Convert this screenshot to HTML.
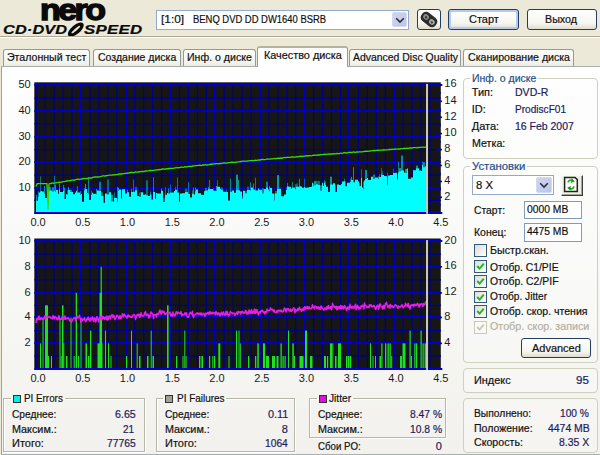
<!DOCTYPE html>
<html lang="ru"><head><meta charset="utf-8"><title>Nero CD-DVD Speed</title>
<style>
html,body{margin:0;padding:0}
body{width:600px;height:455px;background:#ece9d8;position:relative;overflow:hidden;font:11px "Liberation Sans",Arial,sans-serif;color:#111}
.abs{position:absolute}
.t{position:absolute;z-index:5;transform-origin:0 0;-webkit-text-stroke:0.2px currentColor;white-space:pre;line-height:13px;font-size:11px}
.sep{position:absolute;left:0;top:35.6px;width:600px;height:1px;background:#aca899;border-bottom:1px solid #fff}
.panel{position:absolute;left:1px;top:65.5px;width:610px;height:387.5px;background:linear-gradient(#fefefe,#fbfbfa 30%,#f7f7f4 60%,#f2f1ed);border:1px solid #9aa3a4;border-top-color:#a8aeae;border-bottom-color:#a9aeae}
.tab{position:absolute;top:48.5px;height:17.5px;box-sizing:border-box;border:1px solid #919b9c;border-bottom:none;border-radius:3px 3px 0 0;background:linear-gradient(#fdfdfb,#f3f3ec 80%,#eceade)}
.tab.sel{top:46px;height:21px;background:#fefefe;z-index:3;border-top:2px solid #b3b39e}
.combo{position:absolute;box-sizing:border-box;border:1px solid #93aac8;background:#fff}
.dd{position:absolute;box-sizing:border-box;border:1px solid #d3d9f1;border-radius:2px;background:linear-gradient(135deg,#d0d6ee,#bcc5e8)}
.btn{position:absolute;box-sizing:border-box;border:1px solid #213f5c;border-radius:3px;background:linear-gradient(#ffffff,#f6f5ef 70%,#dfdccd)}
.btn.def{box-shadow:inset 0 0 0 2px #b5caf1}
.gb{position:absolute;box-sizing:border-box;border:1px solid #d0d0bf;border-radius:4px;background:rgba(255,255,255,0.25)}
.eb{position:absolute;box-sizing:border-box;border:1px solid #b8b6a9;background:transparent;box-shadow:1px 1px 0 #fff, inset 1px 1px 0 #fff}
.lg{position:absolute;background:#fbfbf9;height:1px}
.cb{position:absolute;box-sizing:border-box;width:12.6px;height:12.6px;border:1px solid #345878;background:linear-gradient(135deg,#dcdcd7,#ffffff)}
.cb.dis{border-color:#cac8bb;background:#fbfbf8}
.cb svg{position:absolute;left:1px;top:1px}
.sq{position:absolute;box-sizing:border-box;width:8px;height:8px;border:1px solid #333}
.edit{position:absolute;box-sizing:border-box;border:1px solid #7f9db9;background:#fff}
</style></head><body>

<!-- logo -->
<div class="abs" style="left:39.5px;top:-10.5px;font:bold 30px/40px 'Liberation Sans',Arial,sans-serif;letter-spacing:-2.2px;color:#0a0a0a;-webkit-text-stroke:1.4px #0a0a0a;transform-origin:0 0;transform:scaleX(1.13)">nero</div>
<div class="abs" id="cds" style="left:2.5px;top:23px;font:italic bold 12px/14px 'Liberation Sans',Arial,sans-serif;color:#0a0a0a;transform-origin:0 0;transform:scaleX(1.36);letter-spacing:0.1px;-webkit-text-stroke:0.2px #0a0a0a">CD·DVD</div>
<svg class="abs" style="left:65px;top:21px" width="22" height="17" viewBox="0 0 22 17"><ellipse cx="10.8" cy="8.6" rx="9.6" ry="4.5" transform="rotate(-40 10.8 8.6)" fill="#0a0a0a"/><ellipse cx="10.8" cy="8.6" rx="5.6" ry="1.1" transform="rotate(-40 10.8 8.6)" fill="#ece9d8"/></svg>
<div class="abs" id="spd" style="left:84px;top:23px;font:italic bold 12px/14px 'Liberation Sans',Arial,sans-serif;color:#0a0a0a;transform-origin:0 0;transform:scaleX(1.4);letter-spacing:0.2px;-webkit-text-stroke:0.2px #0a0a0a">SPEED</div>

<!-- drive combo -->
<div class="combo" style="left:156px;top:10px;width:253px;height:20px"></div>
<div class="dd" style="left:392px;top:12px;width:15px;height:15px"></div>
<svg class="abs" style="left:394.5px;top:17px" width="10" height="7" viewBox="0 0 10 7"><path d="M1.2 1.2 L5 5 L8.8 1.2" fill="none" stroke="#2c2c40" stroke-width="1.6"/></svg>

<!-- icon button -->
<div class="btn" style="left:417px;top:9.2px;width:24px;height:20.4px"></div>
<svg class="abs" style="left:419px;top:10px" width="20" height="19" viewBox="0 0 20 19"><g transform="rotate(38 10 9.5)"><rect x="1.2" y="4.2" width="17.6" height="10.6" rx="4.6" fill="#2c2c2c"/><ellipse cx="6.2" cy="9.3" rx="3" ry="2.6" fill="#8d8d88"/><ellipse cx="13.8" cy="9.7" rx="3" ry="2.6" fill="#a9a9a4"/><ellipse cx="6.4" cy="9.6" rx="1.2" ry="1" fill="#2c2c2c"/><ellipse cx="14" cy="10" rx="1.2" ry="1" fill="#3c3c3c"/></g></svg>

<div class="btn def" style="left:448px;top:9.4px;width:70.5px;height:20.4px"></div>
<div class="btn" style="left:527px;top:9.4px;width:69.5px;height:20.4px"></div>

<div class="sep"></div>

<!-- tabs -->
<div class="tab" style="left:2.5px;width:87.5px"></div>
<div class="tab" style="left:93px;width:88px"></div>
<div class="tab" style="left:183px;width:73px"></div>
<div class="tab" style="left:349px;width:112px"></div>
<div class="tab" style="left:463px;width:111px"></div>
<div class="panel"></div>
<div class="tab sel" style="left:257px;width:91px"></div>

<svg class="abs" style="left:0;top:68px" width="462" height="322" viewBox="0 68 462 322" font-family="Liberation Sans, Arial, sans-serif" font-size="11" fill="#1a1a1a">
<rect x="34.3" y="82.3" width="406.5" height="131.4" fill="#161614"/>
<rect x="35.36" y="84.9" width="1.6" height="127.8" fill="#000090"/>
<rect x="44.61" y="84.9" width="1.2" height="127.8" fill="#000084"/>
<rect x="53.56" y="84.9" width="1.2" height="127.8" fill="#000084"/>
<rect x="62.51" y="84.9" width="1.2" height="127.8" fill="#000084"/>
<rect x="71.46" y="84.9" width="1.2" height="127.8" fill="#000084"/>
<rect x="80" y="84.9" width="2" height="127.8" fill="#0000b6"/>
<rect x="89.35" y="84.9" width="1.2" height="127.8" fill="#000084"/>
<rect x="98.30" y="84.9" width="1.2" height="127.8" fill="#000084"/>
<rect x="107.25" y="84.9" width="1.2" height="127.8" fill="#000084"/>
<rect x="116.20" y="84.9" width="1.2" height="127.8" fill="#000084"/>
<rect x="125" y="84.9" width="2" height="127.8" fill="#0000b6"/>
<rect x="134.10" y="84.9" width="1.2" height="127.8" fill="#000084"/>
<rect x="143.05" y="84.9" width="1.2" height="127.8" fill="#000084"/>
<rect x="152.00" y="84.9" width="1.2" height="127.8" fill="#000084"/>
<rect x="160.95" y="84.9" width="1.2" height="127.8" fill="#000084"/>
<rect x="169" y="84.9" width="2" height="127.8" fill="#0000b6"/>
<rect x="178.84" y="84.9" width="1.2" height="127.8" fill="#000084"/>
<rect x="187.79" y="84.9" width="1.2" height="127.8" fill="#000084"/>
<rect x="196.74" y="84.9" width="1.2" height="127.8" fill="#000084"/>
<rect x="205.69" y="84.9" width="1.2" height="127.8" fill="#000084"/>
<rect x="214" y="84.9" width="2" height="127.8" fill="#0000b6"/>
<rect x="223.59" y="84.9" width="1.2" height="127.8" fill="#000084"/>
<rect x="232.54" y="84.9" width="1.2" height="127.8" fill="#000084"/>
<rect x="241.49" y="84.9" width="1.2" height="127.8" fill="#000084"/>
<rect x="250.44" y="84.9" width="1.2" height="127.8" fill="#000084"/>
<rect x="259" y="84.9" width="2" height="127.8" fill="#0000b6"/>
<rect x="268.33" y="84.9" width="1.2" height="127.8" fill="#000084"/>
<rect x="277.28" y="84.9" width="1.2" height="127.8" fill="#000084"/>
<rect x="286.23" y="84.9" width="1.2" height="127.8" fill="#000084"/>
<rect x="295.18" y="84.9" width="1.2" height="127.8" fill="#000084"/>
<rect x="304" y="84.9" width="2" height="127.8" fill="#0000b6"/>
<rect x="313.08" y="84.9" width="1.2" height="127.8" fill="#000084"/>
<rect x="322.03" y="84.9" width="1.2" height="127.8" fill="#000084"/>
<rect x="330.98" y="84.9" width="1.2" height="127.8" fill="#000084"/>
<rect x="339.93" y="84.9" width="1.2" height="127.8" fill="#000084"/>
<rect x="348" y="84.9" width="2" height="127.8" fill="#0000b6"/>
<rect x="357.82" y="84.9" width="1.2" height="127.8" fill="#000084"/>
<rect x="366.77" y="84.9" width="1.2" height="127.8" fill="#000084"/>
<rect x="375.72" y="84.9" width="1.2" height="127.8" fill="#000084"/>
<rect x="384.67" y="84.9" width="1.2" height="127.8" fill="#000084"/>
<rect x="393" y="84.9" width="2" height="127.8" fill="#0000b6"/>
<rect x="402.57" y="84.9" width="1.2" height="127.8" fill="#000084"/>
<rect x="411.52" y="84.9" width="1.2" height="127.8" fill="#000084"/>
<rect x="420.47" y="84.9" width="1.2" height="127.8" fill="#000084"/>
<rect x="429.42" y="84.9" width="1.2" height="127.8" fill="#000084"/>
<rect x="34.3" y="97.60" width="406.5" height="1.2" fill="#00008c"/>
<rect x="34.3" y="110" width="406.5" height="2" fill="#0000c6"/>
<rect x="34.3" y="123.20" width="406.5" height="1.2" fill="#00008c"/>
<rect x="34.3" y="136" width="406.5" height="2" fill="#0000c6"/>
<rect x="34.3" y="149.00" width="406.5" height="1.2" fill="#00008c"/>
<rect x="34.3" y="161" width="406.5" height="2" fill="#0000c6"/>
<rect x="34.3" y="174.50" width="406.5" height="1.2" fill="#00008c"/>
<rect x="34.3" y="187" width="406.5" height="2" fill="#0000c6"/>
<rect x="34.3" y="199.80" width="406.5" height="1.2" fill="#00008c"/>
<rect x="36" y="194.8" width="1" height="6.4" fill="#00ffff" opacity="0.52"/>
<rect x="38" y="191.5" width="1" height="6.1" fill="#00ffff" opacity="0.57"/>
<rect x="40" y="176.4" width="1" height="15.5" fill="#00ffff" opacity="0.39"/>
<rect x="44" y="186.1" width="1" height="8.1" fill="#00ffff" opacity="0.55"/>
<rect x="47" y="189.7" width="1" height="3.8" fill="#00ffff" opacity="0.38"/>
<rect x="49" y="187.0" width="2" height="4.1" fill="#00ffff" opacity="0.48"/>
<rect x="52" y="187.2" width="2" height="4.9" fill="#00ffff" opacity="0.51"/>
<rect x="54" y="175.7" width="1" height="15.5" fill="#00ffff" opacity="0.44"/>
<rect x="55" y="184.7" width="1" height="7.8" fill="#00ffff" opacity="0.57"/>
<rect x="59" y="183.5" width="1" height="6.4" fill="#00ffff" opacity="0.49"/>
<rect x="63" y="184.9" width="1" height="6.7" fill="#00ffff" opacity="0.50"/>
<rect x="64" y="187.7" width="1" height="11.7" fill="#00ffff" opacity="0.57"/>
<rect x="67" y="190.4" width="1" height="4.5" fill="#00ffff" opacity="0.38"/>
<rect x="68" y="187.2" width="1" height="3.4" fill="#00ffff" opacity="0.60"/>
<rect x="70" y="190.0" width="2" height="2.5" fill="#00ffff" opacity="0.51"/>
<rect x="77" y="186.0" width="1" height="7.0" fill="#00ffff" opacity="0.45"/>
<rect x="80" y="191.2" width="1" height="4.4" fill="#00ffff" opacity="0.55"/>
<rect x="84" y="187.9" width="1" height="3.1" fill="#00ffff" opacity="0.42"/>
<rect x="85" y="184.0" width="1" height="5.5" fill="#00ffff" opacity="0.60"/>
<rect x="88" y="178.8" width="1" height="15.5" fill="#00ffff" opacity="0.49"/>
<rect x="91" y="190.9" width="1" height="4.6" fill="#00ffff" opacity="0.44"/>
<rect x="96" y="189.0" width="1" height="5.8" fill="#00ffff" opacity="0.54"/>
<rect x="99" y="181.7" width="2" height="9.9" fill="#00ffff" opacity="0.46"/>
<rect x="101" y="192.3" width="2" height="4.4" fill="#00ffff" opacity="0.39"/>
<rect x="103" y="196.1" width="1" height="7.1" fill="#00ffff" opacity="0.54"/>
<rect x="107" y="179.4" width="2" height="15.5" fill="#00ffff" opacity="0.36"/>
<rect x="111" y="194.7" width="2" height="7.3" fill="#00ffff" opacity="0.55"/>
<rect x="114" y="192.5" width="1" height="6.1" fill="#00ffff" opacity="0.41"/>
<rect x="117" y="187.0" width="1" height="15.5" fill="#00ffff" opacity="0.51"/>
<rect x="118" y="187.7" width="1" height="3.8" fill="#00ffff" opacity="0.60"/>
<rect x="127" y="189.6" width="1" height="3.2" fill="#00ffff" opacity="0.50"/>
<rect x="131" y="188.7" width="1" height="4.0" fill="#00ffff" opacity="0.52"/>
<rect x="133" y="179.6" width="1" height="12.6" fill="#00ffff" opacity="0.43"/>
<rect x="135" y="186.8" width="2" height="4.0" fill="#00ffff" opacity="0.35"/>
<rect x="139" y="192.3" width="2" height="4.9" fill="#00ffff" opacity="0.36"/>
<rect x="146" y="180.2" width="2" height="15.5" fill="#00ffff" opacity="0.39"/>
<rect x="150" y="191.5" width="1" height="3.5" fill="#00ffff" opacity="0.50"/>
<rect x="151" y="194.7" width="1" height="5.3" fill="#00ffff" opacity="0.46"/>
<rect x="153" y="177.0" width="1" height="15.5" fill="#00ffff" opacity="0.48"/>
<rect x="161" y="188.6" width="1" height="2.6" fill="#00ffff" opacity="0.57"/>
<rect x="163" y="198.2" width="2" height="4.4" fill="#00ffff" opacity="0.38"/>
<rect x="165" y="187.2" width="1" height="8.1" fill="#00ffff" opacity="0.41"/>
<rect x="168" y="188.4" width="1" height="5.6" fill="#00ffff" opacity="0.51"/>
<rect x="170" y="184.5" width="1" height="8.4" fill="#00ffff" opacity="0.36"/>
<rect x="175" y="186.7" width="1" height="3.6" fill="#00ffff" opacity="0.35"/>
<rect x="177" y="177.6" width="1" height="15.5" fill="#00ffff" opacity="0.44"/>
<rect x="185" y="188.6" width="2" height="3.9" fill="#00ffff" opacity="0.38"/>
<rect x="188" y="182.2" width="1" height="12.1" fill="#00ffff" opacity="0.44"/>
<rect x="192" y="190.4" width="1" height="3.9" fill="#00ffff" opacity="0.41"/>
<rect x="193" y="187.5" width="1" height="7.0" fill="#00ffff" opacity="0.50"/>
<rect x="195" y="187.5" width="1" height="4.3" fill="#00ffff" opacity="0.50"/>
<rect x="205" y="188.0" width="2" height="3.1" fill="#00ffff" opacity="0.40"/>
<rect x="208" y="186.8" width="1" height="2.7" fill="#00ffff" opacity="0.51"/>
<rect x="209" y="179.9" width="1" height="9.7" fill="#00ffff" opacity="0.47"/>
<rect x="213" y="188.2" width="1" height="2.8" fill="#00ffff" opacity="0.38"/>
<rect x="216" y="186.0" width="1" height="5.4" fill="#00ffff" opacity="0.58"/>
<rect x="217" y="180.2" width="1" height="7.0" fill="#00ffff" opacity="0.41"/>
<rect x="221" y="187.4" width="2" height="2.8" fill="#00ffff" opacity="0.39"/>
<rect x="226" y="189.5" width="1" height="3.1" fill="#00ffff" opacity="0.37"/>
<rect x="230" y="178.6" width="1" height="13.7" fill="#00ffff" opacity="0.51"/>
<rect x="236" y="174.7" width="2" height="15.5" fill="#00ffff" opacity="0.57"/>
<rect x="238" y="180.0" width="1" height="10.8" fill="#00ffff" opacity="0.55"/>
<rect x="242" y="196.4" width="1" height="2.8" fill="#00ffff" opacity="0.45"/>
<rect x="245" y="190.9" width="2" height="2.7" fill="#00ffff" opacity="0.42"/>
<rect x="247" y="186.7" width="2" height="3.9" fill="#00ffff" opacity="0.35"/>
<rect x="250" y="182.3" width="1" height="9.0" fill="#00ffff" opacity="0.51"/>
<rect x="253" y="183.4" width="1" height="6.8" fill="#00ffff" opacity="0.49"/>
<rect x="255" y="177.7" width="1" height="13.4" fill="#00ffff" opacity="0.44"/>
<rect x="262" y="188.3" width="2" height="5.6" fill="#00ffff" opacity="0.51"/>
<rect x="266" y="181.7" width="2" height="6.2" fill="#00ffff" opacity="0.46"/>
<rect x="269" y="186.1" width="1" height="5.8" fill="#00ffff" opacity="0.58"/>
<rect x="274" y="193.7" width="1" height="7.2" fill="#00ffff" opacity="0.53"/>
<rect x="275" y="191.0" width="2" height="2.6" fill="#00ffff" opacity="0.41"/>
<rect x="277" y="175.1" width="2" height="14.5" fill="#00ffff" opacity="0.58"/>
<rect x="286" y="187.4" width="1" height="3.1" fill="#00ffff" opacity="0.36"/>
<rect x="287" y="182.9" width="1" height="4.1" fill="#00ffff" opacity="0.48"/>
<rect x="292" y="182.1" width="1" height="5.9" fill="#00ffff" opacity="0.45"/>
<rect x="295" y="184.2" width="1" height="5.6" fill="#00ffff" opacity="0.41"/>
<rect x="296" y="183.5" width="2" height="3.7" fill="#00ffff" opacity="0.36"/>
<rect x="299" y="179.1" width="1" height="7.7" fill="#00ffff" opacity="0.54"/>
<rect x="304" y="178.6" width="1" height="8.9" fill="#00ffff" opacity="0.35"/>
<rect x="313" y="183.5" width="1" height="3.4" fill="#00ffff" opacity="0.49"/>
<rect x="314" y="181.1" width="2" height="4.6" fill="#00ffff" opacity="0.59"/>
<rect x="316" y="180.8" width="2" height="4.0" fill="#00ffff" opacity="0.39"/>
<rect x="318" y="181.1" width="2" height="4.5" fill="#00ffff" opacity="0.40"/>
<rect x="320" y="185.2" width="2" height="6.0" fill="#00ffff" opacity="0.50"/>
<rect x="324" y="180.2" width="1" height="3.5" fill="#00ffff" opacity="0.48"/>
<rect x="325" y="181.4" width="1" height="3.9" fill="#00ffff" opacity="0.51"/>
<rect x="330" y="176.7" width="2" height="8.2" fill="#00ffff" opacity="0.55"/>
<rect x="335" y="184.6" width="1" height="7.8" fill="#00ffff" opacity="0.39"/>
<rect x="344" y="178.8" width="1" height="3.0" fill="#00ffff" opacity="0.43"/>
<rect x="345" y="181.4" width="1" height="5.3" fill="#00ffff" opacity="0.43"/>
<rect x="350" y="178.7" width="1" height="3.8" fill="#00ffff" opacity="0.36"/>
<rect x="351" y="176.9" width="1" height="3.8" fill="#00ffff" opacity="0.57"/>
<rect x="353" y="167.3" width="1" height="15.5" fill="#00ffff" opacity="0.55"/>
<rect x="359" y="183.2" width="1" height="3.4" fill="#00ffff" opacity="0.53"/>
<rect x="361" y="169.2" width="1" height="9.3" fill="#00ffff" opacity="0.35"/>
<rect x="363" y="181.7" width="1" height="8.4" fill="#00ffff" opacity="0.56"/>
<rect x="365" y="169.9" width="2" height="9.6" fill="#00ffff" opacity="0.54"/>
<rect x="373" y="174.6" width="2" height="4.9" fill="#00ffff" opacity="0.47"/>
<rect x="378" y="176.5" width="1" height="2.9" fill="#00ffff" opacity="0.54"/>
<rect x="379" y="174.2" width="1" height="3.3" fill="#00ffff" opacity="0.46"/>
<rect x="381" y="168.1" width="1" height="6.9" fill="#00ffff" opacity="0.41"/>
<rect x="382" y="171.2" width="1" height="4.4" fill="#00ffff" opacity="0.38"/>
<rect x="387" y="172.6" width="1" height="13.1" fill="#00ffff" opacity="0.41"/>
<rect x="393" y="168.7" width="1" height="4.8" fill="#00ffff" opacity="0.36"/>
<rect x="398" y="161.8" width="1" height="11.0" fill="#00ffff" opacity="0.43"/>
<rect x="399" y="168.0" width="2" height="3.8" fill="#00ffff" opacity="0.54"/>
<rect x="401" y="155.5" width="2" height="15.5" fill="#00ffff" opacity="0.52"/>
<rect x="405" y="169.0" width="2" height="4.5" fill="#00ffff" opacity="0.56"/>
<rect x="416" y="165.6" width="2" height="3.1" fill="#00ffff" opacity="0.53"/>
<rect x="422" y="161.5" width="1" height="3.8" fill="#00ffff" opacity="0.42"/>
<rect x="423" y="162.1" width="2" height="5.7" fill="#00ffff" opacity="0.49"/>
<path d="M36,212.7 L36,200.7 L37,200.7 L37,200.7 L38,200.7 L38,197.1 L39,197.1 L39,192.4 L40,192.4 L40,191.4 L41,191.4 L41,191.0 L42,191.0 L42,191.5 L43,191.5 L43,191.5 L44,191.5 L44,193.7 L45,193.7 L45,198.0 L46,198.0 L46,198.0 L47,198.0 L47,193.0 L48,193.0 L48,193.0 L49,193.0 L49,190.6 L50,190.6 L50,190.6 L51,190.6 L51,190.6 L52,190.6 L52,191.6 L53,191.6 L53,191.6 L54,191.6 L54,190.7 L55,190.7 L55,192.0 L56,192.0 L56,190.0 L57,190.0 L57,190.0 L58,190.0 L58,193.8 L59,193.8 L59,189.4 L60,189.4 L60,192.1 L61,192.1 L61,192.1 L62,192.1 L62,192.1 L63,192.1 L63,191.1 L64,191.1 L64,199.0 L65,199.0 L65,199.0 L66,199.0 L66,194.2 L67,194.2 L67,194.4 L68,194.4 L68,190.0 L69,190.0 L69,190.0 L70,190.0 L70,192.0 L71,192.0 L71,192.0 L72,192.0 L72,192.0 L73,192.0 L73,194.3 L74,194.3 L74,194.3 L75,194.3 L75,192.4 L76,192.4 L76,190.7 L77,190.7 L77,192.6 L78,192.6 L78,192.6 L79,192.6 L79,192.6 L80,192.6 L80,195.1 L81,195.1 L81,194.0 L82,194.0 L82,201.8 L83,201.8 L83,201.8 L84,201.8 L84,190.5 L85,190.5 L85,188.9 L86,188.9 L86,188.9 L87,188.9 L87,192.9 L88,192.9 L88,193.8 L89,193.8 L89,200.0 L90,200.0 L90,200.0 L91,200.0 L91,195.0 L92,195.0 L92,192.8 L93,192.8 L93,193.8 L94,193.8 L94,193.8 L95,193.8 L95,193.8 L96,193.8 L96,194.3 L97,194.3 L97,190.4 L98,190.4 L98,190.4 L99,190.4 L99,191.1 L100,191.1 L100,191.1 L101,191.1 L101,196.1 L102,196.1 L102,196.1 L103,196.1 L103,202.7 L104,202.7 L104,202.7 L105,202.7 L105,193.4 L106,193.4 L106,193.4 L107,193.4 L107,194.4 L108,194.4 L108,194.4 L109,194.4 L109,192.2 L110,192.2 L110,192.2 L111,192.2 L111,201.5 L112,201.5 L112,201.5 L113,201.5 L113,201.5 L114,201.5 L114,198.1 L115,198.1 L115,198.1 L116,198.1 L116,198.1 L117,198.1 L117,202.0 L118,202.0 L118,191.0 L119,191.0 L119,189.4 L120,189.4 L120,189.4 L121,189.4 L121,198.4 L122,198.4 L122,189.3 L123,189.3 L123,189.3 L124,189.3 L124,189.3 L125,189.3 L125,193.6 L126,193.6 L126,193.6 L127,193.6 L127,192.3 L128,192.3 L128,192.3 L129,192.3 L129,196.7 L130,196.7 L130,196.7 L131,196.7 L131,192.1 L132,192.1 L132,192.1 L133,192.1 L133,191.7 L134,191.7 L134,191.7 L135,191.7 L135,190.3 L136,190.3 L136,190.3 L137,190.3 L137,195.9 L138,195.9 L138,195.9 L139,195.9 L139,196.7 L140,196.7 L140,196.7 L141,196.7 L141,192.2 L142,192.2 L142,192.2 L143,192.2 L143,194.7 L144,194.7 L144,194.7 L145,194.7 L145,194.3 L146,194.3 L146,195.2 L147,195.2 L147,195.2 L148,195.2 L148,196.0 L149,196.0 L149,196.0 L150,196.0 L150,194.5 L151,194.5 L151,199.4 L152,199.4 L152,199.4 L153,199.4 L153,192.0 L154,192.0 L154,192.0 L155,192.0 L155,198.7 L156,198.7 L156,192.9 L157,192.9 L157,193.4 L158,193.4 L158,193.4 L159,193.4 L159,193.6 L160,193.6 L160,193.6 L161,193.6 L161,190.7 L162,190.7 L162,190.7 L163,190.7 L163,202.0 L164,202.0 L164,202.0 L165,202.0 L165,194.7 L166,194.7 L166,194.7 L167,194.7 L167,193.0 L168,193.0 L168,193.6 L169,193.6 L169,193.6 L170,193.6 L170,192.5 L171,192.5 L171,192.5 L172,192.5 L172,192.6 L173,192.6 L173,192.6 L174,192.6 L174,191.0 L175,191.0 L175,189.8 L176,189.8 L176,189.8 L177,189.8 L177,192.6 L178,192.6 L178,192.6 L179,192.6 L179,201.7 L180,201.7 L180,193.6 L181,193.6 L181,193.6 L182,193.6 L182,193.2 L183,193.2 L183,193.2 L184,193.2 L184,193.2 L185,193.2 L185,192.0 L186,192.0 L186,192.0 L187,192.0 L187,192.0 L188,192.0 L188,193.9 L189,193.9 L189,193.9 L190,193.9 L190,197.6 L191,197.6 L191,197.6 L192,197.6 L192,193.8 L193,193.8 L193,194.0 L194,194.0 L194,194.4 L195,194.4 L195,191.3 L196,191.3 L196,189.6 L197,189.6 L197,189.6 L198,189.6 L198,193.2 L199,193.2 L199,193.2 L200,193.2 L200,193.2 L201,193.2 L201,194.8 L202,194.8 L202,194.8 L203,194.8 L203,195.1 L204,195.1 L204,191.3 L205,191.3 L205,190.6 L206,190.6 L206,190.6 L207,190.6 L207,190.6 L208,190.6 L208,189.0 L209,189.0 L209,189.1 L210,189.1 L210,189.1 L211,189.1 L211,189.1 L212,189.1 L212,189.1 L213,189.1 L213,190.5 L214,190.5 L214,190.7 L215,190.7 L215,190.7 L216,190.7 L216,191.0 L217,191.0 L217,186.8 L218,186.8 L218,186.8 L219,186.8 L219,186.8 L220,186.8 L220,188.8 L221,188.8 L221,189.7 L222,189.7 L222,189.7 L223,189.7 L223,191.8 L224,191.8 L224,191.8 L225,191.8 L225,191.8 L226,191.8 L226,192.0 L227,192.0 L227,192.0 L228,192.0 L228,200.6 L229,200.6 L229,200.6 L230,200.6 L230,191.8 L231,191.8 L231,191.8 L232,191.8 L232,190.4 L233,190.4 L233,190.4 L234,190.4 L234,192.8 L235,192.8 L235,192.8 L236,192.8 L236,189.7 L237,189.7 L237,189.7 L238,189.7 L238,190.2 L239,190.2 L239,190.2 L240,190.2 L240,191.5 L241,191.5 L241,191.5 L242,191.5 L242,198.7 L243,198.7 L243,190.7 L244,190.7 L244,190.7 L245,190.7 L245,193.2 L246,193.2 L246,193.2 L247,193.2 L247,190.1 L248,190.1 L248,190.1 L249,190.1 L249,190.1 L250,190.1 L250,190.8 L251,190.8 L251,187.6 L252,187.6 L252,187.6 L253,187.6 L253,189.6 L254,189.6 L254,189.6 L255,189.6 L255,190.6 L256,190.6 L256,190.6 L257,190.6 L257,190.6 L258,190.6 L258,188.6 L259,188.6 L259,189.8 L260,189.8 L260,189.8 L261,189.8 L261,189.8 L262,189.8 L262,193.4 L263,193.4 L263,193.4 L264,193.4 L264,189.1 L265,189.1 L265,189.1 L266,189.1 L266,187.4 L267,187.4 L267,187.4 L268,187.4 L268,189.6 L269,189.6 L269,191.5 L270,191.5 L270,188.0 L271,188.0 L271,188.0 L272,188.0 L272,193.4 L273,193.4 L273,193.4 L274,193.4 L274,200.4 L275,200.4 L275,193.2 L276,193.2 L276,193.2 L277,193.2 L277,189.1 L278,189.1 L278,189.1 L279,189.1 L279,188.7 L280,188.7 L280,188.7 L281,188.7 L281,196.3 L282,196.3 L282,196.3 L283,196.3 L283,196.3 L284,196.3 L284,194.4 L285,194.4 L285,194.4 L286,194.4 L286,190.1 L287,190.1 L287,186.5 L288,186.5 L288,186.5 L289,186.5 L289,186.7 L290,186.7 L290,186.7 L291,186.7 L291,188.4 L292,188.4 L292,187.5 L293,187.5 L293,187.5 L294,187.5 L294,187.5 L295,187.5 L295,189.3 L296,189.3 L296,186.7 L297,186.7 L297,186.7 L298,186.7 L298,186.7 L299,186.7 L299,186.2 L300,186.2 L300,186.2 L301,186.2 L301,186.4 L302,186.4 L302,187.8 L303,187.8 L303,187.8 L304,187.8 L304,187.0 L305,187.0 L305,187.8 L306,187.8 L306,187.8 L307,187.8 L307,187.5 L308,187.5 L308,187.5 L309,187.5 L309,186.9 L310,186.9 L310,186.9 L311,186.9 L311,186.8 L312,186.8 L312,182.7 L313,182.7 L313,186.4 L314,186.4 L314,185.2 L315,185.2 L315,185.2 L316,185.2 L316,184.3 L317,184.3 L317,184.3 L318,184.3 L318,185.1 L319,185.1 L319,185.1 L320,185.1 L320,190.7 L321,190.7 L321,190.7 L322,190.7 L322,182.8 L323,182.8 L323,186.0 L324,186.0 L324,183.1 L325,183.1 L325,184.9 L326,184.9 L326,186.7 L327,186.7 L327,186.7 L328,186.7 L328,191.9 L329,191.9 L329,191.9 L330,191.9 L330,184.4 L331,184.4 L331,184.4 L332,184.4 L332,184.4 L333,184.4 L333,183.2 L334,183.2 L334,183.2 L335,183.2 L335,191.9 L336,191.9 L336,191.9 L337,191.9 L337,184.5 L338,184.5 L338,184.5 L339,184.5 L339,185.1 L340,185.1 L340,185.1 L341,185.1 L341,184.1 L342,184.1 L342,181.4 L343,181.4 L343,181.4 L344,181.4 L344,181.3 L345,181.3 L345,186.2 L346,186.2 L346,186.2 L347,186.2 L347,182.7 L348,182.7 L348,182.7 L349,182.7 L349,182.7 L350,182.7 L350,182.0 L351,182.0 L351,180.1 L352,180.1 L352,180.1 L353,180.1 L353,182.3 L354,182.3 L354,182.3 L355,182.3 L355,179.7 L356,179.7 L356,179.7 L357,179.7 L357,179.7 L358,179.7 L358,181.5 L359,181.5 L359,186.1 L360,186.1 L360,186.1 L361,186.1 L361,178.0 L362,178.0 L362,187.5 L363,187.5 L363,189.6 L364,189.6 L364,180.4 L365,180.4 L365,179.1 L366,179.1 L366,179.1 L367,179.1 L367,177.9 L368,177.9 L368,180.0 L369,180.0 L369,180.0 L370,180.0 L370,180.0 L371,180.0 L371,176.8 L372,176.8 L372,176.8 L373,176.8 L373,179.0 L374,179.0 L374,179.0 L375,179.0 L375,177.6 L376,177.6 L376,177.6 L377,177.6 L377,177.6 L378,177.6 L378,178.9 L379,178.9 L379,177.0 L380,177.0 L380,177.0 L381,177.0 L381,174.5 L382,174.5 L382,175.1 L383,175.1 L383,175.1 L384,175.1 L384,176.0 L385,176.0 L385,176.0 L386,176.0 L386,176.2 L387,176.2 L387,185.1 L388,185.1 L388,175.5 L389,175.5 L389,175.5 L390,175.5 L390,175.1 L391,175.1 L391,175.1 L392,175.1 L392,175.1 L393,175.1 L393,173.0 L394,173.0 L394,173.0 L395,173.0 L395,172.7 L396,172.7 L396,172.7 L397,172.7 L397,179.4 L398,179.4 L398,172.4 L399,172.4 L399,171.3 L400,171.3 L400,171.3 L401,171.3 L401,170.5 L402,170.5 L402,170.5 L403,170.5 L403,170.5 L404,170.5 L404,172.4 L405,172.4 L405,173.0 L406,173.0 L406,173.0 L407,173.0 L407,168.6 L408,168.6 L408,178.7 L409,178.7 L409,178.7 L410,178.7 L410,178.7 L411,178.7 L411,177.4 L412,177.4 L412,177.4 L413,177.4 L413,170.2 L414,170.2 L414,170.2 L415,170.2 L415,170.2 L416,170.2 L416,168.2 L417,168.2 L417,168.2 L418,168.2 L418,168.2 L419,168.2 L419,170.6 L420,170.6 L420,170.6 L421,170.6 L421,171.1 L422,171.1 L422,164.9 L423,164.9 L423,167.3 L424,167.3 L424,167.3 L425,167.3 L425,166.3 L426,166.3 L426,212.7 Z" fill="#00ffff"/>
<path d="M36,186.5 L37,183.7 L38,183.7 L39,183.7 L40,183.7 L41,183.7 L42,183.7 L43,183.7 L44,183.7 L45,183.7 L46,183.7 L47,183.7 L48,209.0 L49,184.0 L50,183.5 L51,183.7 L52,183.2 L53,183.0 L54,183.3 L55,182.9 L56,182.8 L57,182.7 L58,182.7 L59,182.2 L60,182.3 L61,182.1 L62,182.0 L63,181.6 L64,181.6 L65,181.4 L66,181.1 L67,180.9 L68,181.0 L69,180.5 L70,180.9 L71,180.3 L72,180.1 L73,180.0 L74,180.3 L75,179.8 L76,179.6 L77,179.4 L78,179.2 L79,179.5 L80,179.3 L81,179.2 L82,179.1 L83,178.5 L84,178.7 L85,178.5 L86,178.6 L87,178.5 L88,178.4 L89,177.7 L90,178.1 L91,178.0 L92,177.9 L93,177.2 L94,177.2 L95,177.0 L96,176.8 L97,177.2 L98,177.0 L99,176.8 L100,176.8 L101,176.5 L102,176.2 L103,175.9 L104,175.8 L105,176.1 L106,175.6 L107,175.6 L108,175.5 L109,175.1 L110,175.2 L111,175.1 L112,175.2 L113,174.9 L114,174.7 L115,175.0 L116,174.6 L117,174.7 L118,174.4 L119,173.9 L120,174.0 L121,173.9 L122,174.0 L123,173.6 L124,173.7 L125,173.5 L126,173.2 L127,173.5 L128,172.9 L129,173.2 L130,172.7 L131,172.5 L132,172.5 L133,172.7 L134,172.7 L135,172.0 L136,172.2 L137,172.1 L138,172.2 L139,171.7 L140,171.8 L141,171.5 L142,171.7 L143,171.3 L144,171.6 L145,171.1 L146,170.9 L147,171.1 L148,170.9 L149,170.5 L150,170.7 L151,170.3 L152,170.6 L153,170.4 L154,170.4 L155,170.2 L156,169.9 L157,169.8 L158,169.7 L159,169.9 L160,169.3 L161,169.7 L162,169.0 L163,169.0 L164,169.0 L165,169.3 L166,168.9 L167,168.7 L168,168.9 L169,168.4 L170,168.5 L171,168.4 L172,168.4 L173,168.3 L174,168.2 L175,167.9 L176,167.8 L177,167.5 L178,167.9 L179,167.6 L180,167.6 L181,167.1 L182,167.2 L183,167.3 L184,167.1 L185,166.7 L186,166.8 L187,167.0 L188,166.5 L189,166.3 L190,166.3 L191,166.5 L192,166.4 L193,165.9 L194,165.8 L195,165.8 L196,165.7 L197,165.7 L198,165.4 L199,165.4 L200,165.2 L201,165.6 L202,165.4 L203,164.9 L204,165.3 L205,164.7 L206,164.8 L207,165.0 L208,164.8 L209,164.7 L210,164.4 L211,164.2 L212,164.4 L213,163.9 L214,163.9 L215,163.9 L216,163.6 L217,163.7 L218,163.9 L219,163.7 L220,163.5 L221,163.5 L222,163.3 L223,163.0 L224,163.2 L225,163.0 L226,163.1 L227,163.1 L228,162.7 L229,162.7 L230,162.7 L231,162.4 L232,162.2 L233,162.4 L234,162.4 L235,162.3 L236,162.1 L237,162.1 L238,161.9 L239,161.8 L240,161.6 L241,161.4 L242,161.5 L243,161.1 L244,161.2 L245,161.4 L246,161.2 L247,161.1 L248,160.8 L249,160.8 L250,160.7 L251,160.7 L252,160.5 L253,160.6 L254,160.7 L255,160.1 L256,160.3 L257,160.3 L258,160.0 L259,160.0 L260,160.2 L261,159.5 L262,159.7 L263,159.4 L264,159.7 L265,159.7 L266,159.4 L267,159.0 L268,159.2 L269,159.1 L270,159.1 L271,158.9 L272,158.9 L273,158.9 L274,158.7 L275,158.5 L276,158.8 L277,158.2 L278,158.4 L279,158.2 L280,158.3 L281,157.8 L282,158.3 L283,157.8 L284,157.5 L285,157.6 L286,157.6 L287,157.3 L288,157.4 L289,157.3 L290,157.4 L291,157.1 L292,157.0 L293,156.9 L294,157.1 L295,157.2 L296,156.8 L297,156.6 L298,156.8 L299,156.5 L300,156.3 L301,156.2 L302,156.5 L303,156.4 L304,156.2 L305,156.1 L306,156.0 L307,155.7 L308,156.1 L309,155.7 L310,155.7 L311,155.8 L312,155.7 L313,155.4 L314,155.2 L315,155.3 L316,155.0 L317,155.3 L318,154.9 L319,155.2 L320,154.7 L321,154.7 L322,154.6 L323,154.6 L324,154.4 L325,154.2 L326,154.5 L327,154.2 L328,154.1 L329,154.0 L330,154.1 L331,153.9 L332,154.0 L333,153.9 L334,153.7 L335,153.9 L336,153.8 L337,153.3 L338,153.6 L339,153.6 L340,153.5 L341,153.0 L342,153.3 L343,153.1 L344,152.7 L345,152.6 L346,153.1 L347,152.8 L348,152.5 L349,152.3 L350,152.3 L351,152.3 L352,152.5 L353,152.2 L354,152.0 L355,152.4 L356,152.2 L357,151.8 L358,152.1 L359,151.9 L360,151.9 L361,151.8 L362,151.8 L363,151.7 L364,151.6 L365,151.2 L366,151.4 L367,151.2 L368,151.3 L369,151.0 L370,151.2 L371,150.9 L372,150.7 L373,150.6 L374,150.5 L375,150.6 L376,150.3 L377,150.4 L378,150.2 L379,150.3 L380,150.2 L381,150.2 L382,150.3 L383,149.7 L384,150.2 L385,149.9 L386,149.8 L387,149.8 L388,149.9 L389,149.5 L390,149.5 L391,149.7 L392,149.1 L393,149.4 L394,149.3 L395,148.9 L396,149.1 L397,149.1 L398,149.2 L399,148.8 L400,149.1 L401,148.7 L402,148.6 L403,148.8 L404,148.2 L405,148.6 L406,148.4 L407,148.2 L408,148.4 L409,148.1 L410,148.0 L411,148.0 L412,148.1 L413,147.7 L414,147.7 L415,147.7 L416,147.7 L417,147.8 L418,147.4 L419,147.6 L420,147.3 L421,147.3 L422,147.1 L423,147.1 L424,147.4 L425,147.1 L426,147.1" fill="none" stroke="#36dc04" stroke-width="1.3" stroke-linejoin="round"/>
<rect x="34.3" y="84" width="408" height="2" fill="#0000c8"/>
<rect x="34.3" y="212" width="408" height="2" fill="#0000c8"/>
<rect x="426" y="83.9" width="2" height="129.8" fill="#b4b4b0"/>
<rect x="426.6" y="83.9" width="0.9" height="129.8" fill="#dcdcd8"/>
<text x="30.7" y="87.8" text-anchor="end">50</text>
<text x="30.7" y="113.7" text-anchor="end">40</text>
<text x="30.7" y="139.8" text-anchor="end">30</text>
<text x="30.7" y="165.2" text-anchor="end">20</text>
<text x="30.7" y="190.8" text-anchor="end">10</text>
<rect x="438" y="204.3" width="3" height="1.4" fill="#0000b0"/>
<rect x="436" y="196.5" width="6" height="1.6" fill="#0000c8"/>
<text x="444.3" y="199.7">2</text>
<rect x="438" y="188.8" width="3" height="1.4" fill="#0000b0"/>
<rect x="436" y="180.7" width="6" height="1.6" fill="#0000c8"/>
<text x="444.3" y="183.9">4</text>
<rect x="438" y="172.8" width="3" height="1.4" fill="#0000b0"/>
<rect x="436" y="164.7" width="6" height="1.6" fill="#0000c8"/>
<text x="444.3" y="167.9">6</text>
<rect x="438" y="156.8" width="3" height="1.4" fill="#0000b0"/>
<rect x="436" y="148.8" width="6" height="1.6" fill="#0000c8"/>
<text x="444.3" y="152.0">8</text>
<rect x="438" y="141.0" width="3" height="1.4" fill="#0000b0"/>
<rect x="436" y="132.8" width="6" height="1.6" fill="#0000c8"/>
<text x="444.3" y="136.0">10</text>
<rect x="438" y="124.7" width="3" height="1.4" fill="#0000b0"/>
<rect x="436" y="116.5" width="6" height="1.6" fill="#0000c8"/>
<text x="444.3" y="119.7">12</text>
<rect x="438" y="108.5" width="3" height="1.4" fill="#0000b0"/>
<rect x="436" y="100.5" width="6" height="1.6" fill="#0000c8"/>
<text x="444.3" y="103.8">14</text>
<rect x="438" y="92.5" width="3" height="1.4" fill="#0000b0"/>
<rect x="436" y="84.1" width="6" height="1.6" fill="#0000c8"/>
<text x="444.3" y="87.3">16</text>
<text x="38.1" y="225.8" text-anchor="middle">0.0</text>
<text x="82.8" y="225.8" text-anchor="middle">0.5</text>
<text x="127.5" y="225.8" text-anchor="middle">1.0</text>
<text x="172.3" y="225.8" text-anchor="middle">1.5</text>
<text x="217.0" y="225.8" text-anchor="middle">2.0</text>
<text x="261.8" y="225.8" text-anchor="middle">2.5</text>
<text x="306.5" y="225.8" text-anchor="middle">3.0</text>
<text x="351.3" y="225.8" text-anchor="middle">3.5</text>
<text x="396.0" y="225.8" text-anchor="middle">4.0</text>
<text x="440.8" y="225.8" text-anchor="middle">4.5</text>
<rect x="34.3" y="238.5" width="406.5" height="131.3" fill="#161614"/>
<rect x="35.36" y="241.1" width="1.6" height="127.7" fill="#000090"/>
<rect x="44.61" y="241.1" width="1.2" height="127.7" fill="#000084"/>
<rect x="53.56" y="241.1" width="1.2" height="127.7" fill="#000084"/>
<rect x="62.51" y="241.1" width="1.2" height="127.7" fill="#000084"/>
<rect x="71.46" y="241.1" width="1.2" height="127.7" fill="#000084"/>
<rect x="80" y="241.1" width="2" height="127.7" fill="#0000b6"/>
<rect x="89.35" y="241.1" width="1.2" height="127.7" fill="#000084"/>
<rect x="98.30" y="241.1" width="1.2" height="127.7" fill="#000084"/>
<rect x="107.25" y="241.1" width="1.2" height="127.7" fill="#000084"/>
<rect x="116.20" y="241.1" width="1.2" height="127.7" fill="#000084"/>
<rect x="125" y="241.1" width="2" height="127.7" fill="#0000b6"/>
<rect x="134.10" y="241.1" width="1.2" height="127.7" fill="#000084"/>
<rect x="143.05" y="241.1" width="1.2" height="127.7" fill="#000084"/>
<rect x="152.00" y="241.1" width="1.2" height="127.7" fill="#000084"/>
<rect x="160.95" y="241.1" width="1.2" height="127.7" fill="#000084"/>
<rect x="169" y="241.1" width="2" height="127.7" fill="#0000b6"/>
<rect x="178.84" y="241.1" width="1.2" height="127.7" fill="#000084"/>
<rect x="187.79" y="241.1" width="1.2" height="127.7" fill="#000084"/>
<rect x="196.74" y="241.1" width="1.2" height="127.7" fill="#000084"/>
<rect x="205.69" y="241.1" width="1.2" height="127.7" fill="#000084"/>
<rect x="214" y="241.1" width="2" height="127.7" fill="#0000b6"/>
<rect x="223.59" y="241.1" width="1.2" height="127.7" fill="#000084"/>
<rect x="232.54" y="241.1" width="1.2" height="127.7" fill="#000084"/>
<rect x="241.49" y="241.1" width="1.2" height="127.7" fill="#000084"/>
<rect x="250.44" y="241.1" width="1.2" height="127.7" fill="#000084"/>
<rect x="259" y="241.1" width="2" height="127.7" fill="#0000b6"/>
<rect x="268.33" y="241.1" width="1.2" height="127.7" fill="#000084"/>
<rect x="277.28" y="241.1" width="1.2" height="127.7" fill="#000084"/>
<rect x="286.23" y="241.1" width="1.2" height="127.7" fill="#000084"/>
<rect x="295.18" y="241.1" width="1.2" height="127.7" fill="#000084"/>
<rect x="304" y="241.1" width="2" height="127.7" fill="#0000b6"/>
<rect x="313.08" y="241.1" width="1.2" height="127.7" fill="#000084"/>
<rect x="322.03" y="241.1" width="1.2" height="127.7" fill="#000084"/>
<rect x="330.98" y="241.1" width="1.2" height="127.7" fill="#000084"/>
<rect x="339.93" y="241.1" width="1.2" height="127.7" fill="#000084"/>
<rect x="348" y="241.1" width="2" height="127.7" fill="#0000b6"/>
<rect x="357.82" y="241.1" width="1.2" height="127.7" fill="#000084"/>
<rect x="366.77" y="241.1" width="1.2" height="127.7" fill="#000084"/>
<rect x="375.72" y="241.1" width="1.2" height="127.7" fill="#000084"/>
<rect x="384.67" y="241.1" width="1.2" height="127.7" fill="#000084"/>
<rect x="393" y="241.1" width="2" height="127.7" fill="#0000b6"/>
<rect x="402.57" y="241.1" width="1.2" height="127.7" fill="#000084"/>
<rect x="411.52" y="241.1" width="1.2" height="127.7" fill="#000084"/>
<rect x="420.47" y="241.1" width="1.2" height="127.7" fill="#000084"/>
<rect x="429.42" y="241.1" width="1.2" height="127.7" fill="#000084"/>
<rect x="34.3" y="253.60" width="406.5" height="1.2" fill="#00008c"/>
<rect x="34.3" y="266" width="406.5" height="2" fill="#0000c6"/>
<rect x="34.3" y="279.20" width="406.5" height="1.2" fill="#00008c"/>
<rect x="34.3" y="292" width="406.5" height="2" fill="#0000c6"/>
<rect x="34.3" y="304.70" width="406.5" height="1.2" fill="#00008c"/>
<rect x="34.3" y="316" width="406.5" height="2" fill="#0000c6"/>
<rect x="34.3" y="330.00" width="406.5" height="1.2" fill="#00008c"/>
<rect x="34.3" y="342" width="406.5" height="2" fill="#0000c6"/>
<rect x="34.3" y="355.40" width="406.5" height="1.2" fill="#00008c"/>
<rect x="40.0" y="343.4" width="1" height="25.4" fill="#1fe01f"/>
<rect x="42.5" y="317.5" width="1" height="51.3" fill="#1fe01f"/>
<rect x="45.0" y="305.3" width="3" height="63.5" fill="#1fe01f"/>
<rect x="48.0" y="356.0" width="1" height="12.8" fill="#1fe01f"/>
<rect x="51.0" y="356.0" width="1" height="12.8" fill="#1fe01f"/>
<rect x="59.5" y="317.5" width="1" height="51.3" fill="#1fe01f"/>
<rect x="60.7" y="356.0" width="1" height="12.8" fill="#1fe01f"/>
<rect x="62.0" y="305.3" width="1.5" height="63.5" fill="#1fe01f"/>
<rect x="63.3" y="343.4" width="1" height="25.4" fill="#1fe01f"/>
<rect x="66.0" y="356.0" width="1.5" height="12.8" fill="#1fe01f"/>
<rect x="70.5" y="317.5" width="1" height="51.3" fill="#1fe01f"/>
<rect x="73.7" y="356.0" width="1" height="12.8" fill="#1fe01f"/>
<rect x="75.7" y="292.9" width="1.3" height="75.9" fill="#1fe01f"/>
<rect x="78.0" y="356.0" width="1" height="12.8" fill="#1fe01f"/>
<rect x="80.5" y="317.5" width="1" height="51.3" fill="#1fe01f"/>
<rect x="85.5" y="343.4" width="1.5" height="25.4" fill="#1fe01f"/>
<rect x="88.0" y="356.0" width="1.5" height="12.8" fill="#1fe01f"/>
<rect x="90.0" y="330.6" width="1.3" height="38.2" fill="#1fe01f"/>
<rect x="97.5" y="343.4" width="5" height="25.4" fill="#1fe01f"/>
<rect x="99.5" y="292.9" width="2.5" height="75.9" fill="#1fe01f"/>
<rect x="100.6" y="266.8" width="1.2" height="102.0" fill="#1fe01f"/>
<rect x="105.0" y="330.6" width="1" height="38.2" fill="#1fe01f"/>
<rect x="108.0" y="343.4" width="1" height="25.4" fill="#1fe01f"/>
<rect x="110.5" y="356.0" width="1" height="12.8" fill="#1fe01f"/>
<rect x="126.0" y="356.0" width="1.2" height="12.8" fill="#1fe01f"/>
<rect x="131.0" y="330.6" width="1" height="38.2" fill="#1fe01f"/>
<rect x="136.7" y="343.4" width="1" height="25.4" fill="#1fe01f"/>
<rect x="139.0" y="356.0" width="1.5" height="12.8" fill="#1fe01f"/>
<rect x="147.0" y="356.0" width="1.5" height="12.8" fill="#1fe01f"/>
<rect x="150.7" y="330.6" width="1" height="38.2" fill="#1fe01f"/>
<rect x="152.5" y="356.0" width="1.5" height="12.8" fill="#1fe01f"/>
<rect x="167.0" y="305.3" width="1.6" height="63.5" fill="#1fe01f"/>
<rect x="176.0" y="356.0" width="1.3" height="12.8" fill="#1fe01f"/>
<rect x="182.5" y="356.0" width="1" height="12.8" fill="#1fe01f"/>
<rect x="184.3" y="330.6" width="1" height="38.2" fill="#1fe01f"/>
<rect x="185.6" y="356.0" width="1" height="12.8" fill="#1fe01f"/>
<rect x="199.0" y="356.0" width="1" height="12.8" fill="#1fe01f"/>
<rect x="200.6" y="356.0" width="1" height="12.8" fill="#1fe01f"/>
<rect x="202.0" y="356.0" width="1" height="12.8" fill="#1fe01f"/>
<rect x="209.0" y="356.0" width="1.2" height="12.8" fill="#1fe01f"/>
<rect x="212.3" y="356.0" width="1" height="12.8" fill="#1fe01f"/>
<rect x="214.0" y="356.0" width="1.2" height="12.8" fill="#1fe01f"/>
<rect x="218.3" y="343.4" width="2" height="25.4" fill="#1fe01f"/>
<rect x="228.5" y="356.0" width="1" height="12.8" fill="#1fe01f"/>
<rect x="236.0" y="330.6" width="1" height="38.2" fill="#1fe01f"/>
<rect x="238.5" y="330.6" width="1" height="38.2" fill="#1fe01f"/>
<rect x="239.8" y="343.4" width="1" height="25.4" fill="#1fe01f"/>
<rect x="248.0" y="356.0" width="1.3" height="12.8" fill="#1fe01f"/>
<rect x="255.0" y="356.0" width="1.3" height="12.8" fill="#1fe01f"/>
<rect x="257.3" y="343.4" width="1.5" height="25.4" fill="#1fe01f"/>
<rect x="263.0" y="343.4" width="2" height="25.4" fill="#1fe01f"/>
<rect x="266.0" y="356.0" width="3" height="12.8" fill="#1fe01f"/>
<rect x="272.0" y="356.0" width="3" height="12.8" fill="#1fe01f"/>
<rect x="276.5" y="356.0" width="2" height="12.8" fill="#1fe01f"/>
<rect x="280.5" y="343.4" width="1.3" height="25.4" fill="#1fe01f"/>
<rect x="282.5" y="356.0" width="1.2" height="12.8" fill="#1fe01f"/>
<rect x="284.5" y="356.0" width="1.2" height="12.8" fill="#1fe01f"/>
<rect x="288.0" y="330.6" width="1" height="38.2" fill="#1fe01f"/>
<rect x="292.3" y="343.4" width="1.5" height="25.4" fill="#1fe01f"/>
<rect x="294.0" y="356.0" width="1" height="12.8" fill="#1fe01f"/>
<rect x="299.5" y="356.0" width="4" height="12.8" fill="#1fe01f"/>
<rect x="305.0" y="330.6" width="2" height="38.2" fill="#1fe01f"/>
<rect x="310.0" y="356.0" width="2.5" height="12.8" fill="#1fe01f"/>
<rect x="324.0" y="356.0" width="2" height="12.8" fill="#1fe01f"/>
<rect x="327.0" y="356.0" width="1.2" height="12.8" fill="#1fe01f"/>
<rect x="330.0" y="343.4" width="2" height="25.4" fill="#1fe01f"/>
<rect x="332.3" y="343.4" width="1" height="25.4" fill="#1fe01f"/>
<rect x="335.0" y="356.0" width="1.5" height="12.8" fill="#1fe01f"/>
<rect x="338.0" y="343.4" width="3" height="25.4" fill="#1fe01f"/>
<rect x="346.0" y="356.0" width="1.5" height="12.8" fill="#1fe01f"/>
<rect x="348.0" y="356.0" width="1.5" height="12.8" fill="#1fe01f"/>
<rect x="350.0" y="356.0" width="1.2" height="12.8" fill="#1fe01f"/>
<rect x="370.0" y="343.4" width="1" height="25.4" fill="#1fe01f"/>
<rect x="372.5" y="356.0" width="1" height="12.8" fill="#1fe01f"/>
<rect x="375.0" y="356.0" width="1" height="12.8" fill="#1fe01f"/>
<rect x="379.5" y="356.0" width="1.5" height="12.8" fill="#1fe01f"/>
<rect x="381.3" y="343.4" width="1.2" height="25.4" fill="#1fe01f"/>
<rect x="385.0" y="343.4" width="1.3" height="25.4" fill="#1fe01f"/>
<rect x="387.5" y="343.4" width="1.3" height="25.4" fill="#1fe01f"/>
<rect x="389.5" y="343.4" width="1.3" height="25.4" fill="#1fe01f"/>
<rect x="391.2" y="356.0" width="1" height="12.8" fill="#1fe01f"/>
<rect x="400.0" y="356.0" width="2" height="12.8" fill="#1fe01f"/>
<rect x="402.5" y="343.4" width="3" height="25.4" fill="#1fe01f"/>
<rect x="409.5" y="330.6" width="1.2" height="38.2" fill="#1fe01f"/>
<rect x="411.0" y="356.0" width="1" height="12.8" fill="#1fe01f"/>
<rect x="414.3" y="343.4" width="1.2" height="25.4" fill="#1fe01f"/>
<rect x="416.0" y="343.4" width="1.2" height="25.4" fill="#1fe01f"/>
<rect x="420.5" y="330.6" width="1.2" height="38.2" fill="#1fe01f"/>
<rect x="422.5" y="343.4" width="1.2" height="25.4" fill="#1fe01f"/>
<rect x="424.6" y="343.4" width="2.5" height="25.4" fill="#1fe01f"/>
<path d="M36,323.0 L36.5,319.0 L37.0,319.9 L37.5,318.2 L38.0,319.6 L38.5,316.9 L39.0,316.0 L39.5,319.5 L40.0,319.0 L40.5,319.6 L41.0,317.4 L41.5,319.0 L42.0,318.7 L42.5,319.1 L43.0,318.5 L43.5,319.8 L44.0,317.8 L44.5,316.8 L45.0,315.8 L45.5,319.0 L46.0,317.4 L46.5,316.6 L47.0,316.5 L47.5,317.1 L48.0,316.2 L48.5,317.2 L49.0,317.1 L49.5,317.2 L50.0,316.7 L50.5,317.9 L51.0,317.6 L51.5,318.2 L52.0,318.6 L52.5,318.9 L53.0,315.6 L53.5,316.8 L54.0,316.8 L54.5,318.9 L55.0,316.5 L55.5,316.9 L56.0,317.6 L56.5,317.7 L57.0,319.5 L57.5,318.2 L58.0,319.7 L58.5,316.9 L59.0,315.6 L59.5,319.2 L60.0,319.3 L60.5,319.4 L61.0,318.9 L61.5,319.3 L62.0,317.1 L62.5,319.4 L63.0,318.1 L63.5,319.7 L64.0,319.0 L64.5,316.1 L65.0,316.1 L65.5,319.3 L66.0,318.6 L66.5,318.1 L67.0,318.8 L67.5,318.1 L68.0,317.7 L68.5,318.5 L69.0,318.8 L69.5,320.7 L70.0,319.3 L70.5,321.3 L71.0,321.8 L71.5,321.9 L72.0,321.0 L72.5,319.5 L73.0,319.1 L73.5,318.6 L74.0,317.7 L74.5,318.3 L75.0,317.7 L75.5,320.6 L76.0,320.0 L76.5,318.5 L77.0,316.1 L77.5,317.9 L78.0,317.9 L78.5,317.0 L79.0,316.7 L79.5,315.1 L80.0,318.4 L80.5,318.6 L81.0,322.1 L81.5,319.7 L82.0,318.9 L82.5,320.7 L83.0,319.6 L83.5,319.2 L84.0,318.4 L84.5,317.9 L85.0,320.5 L85.5,320.7 L86.0,321.7 L86.5,319.2 L87.0,319.0 L87.5,317.7 L88.0,319.8 L88.5,317.3 L89.0,319.1 L89.5,320.4 L90.0,321.2 L90.5,318.3 L91.0,320.2 L91.5,318.3 L92.0,317.7 L92.5,316.8 L93.0,319.8 L93.5,321.4 L94.0,318.9 L94.5,317.9 L95.0,318.2 L95.5,322.1 L96.0,321.2 L96.5,318.9 L97.0,316.6 L97.5,317.4 L98.0,320.1 L98.5,321.8 L99.0,319.5 L99.5,318.2 L100.0,318.1 L100.5,316.2 L101.0,319.3 L101.5,317.5 L102.0,319.8 L102.5,316.7 L103.0,316.4 L103.5,318.3 L104.0,317.4 L104.5,319.2 L105.0,318.6 L105.5,316.9 L106.0,318.7 L106.5,319.5 L107.0,316.0 L107.5,319.9 L108.0,319.3 L108.5,319.4 L109.0,315.9 L109.5,316.3 L110.0,316.9 L110.5,318.9 L111.0,316.1 L111.5,316.0 L112.0,314.4 L112.5,316.3 L113.0,317.6 L113.5,315.2 L114.0,315.9 L114.5,317.6 L115.0,319.5 L115.5,318.7 L116.0,317.2 L116.5,315.5 L117.0,315.3 L117.5,315.6 L118.0,316.7 L118.5,316.7 L119.0,319.0 L119.5,317.8 L120.0,315.6 L120.5,318.4 L121.0,318.4 L121.5,317.2 L122.0,315.7 L122.5,313.7 L123.0,314.2 L123.5,316.8 L124.0,315.3 L124.5,314.1 L125.0,315.8 L125.5,316.3 L126.0,316.9 L126.5,317.1 L127.0,318.2 L127.5,315.5 L128.0,317.1 L128.5,314.9 L129.0,316.5 L129.5,316.3 L130.0,316.3 L130.5,317.2 L131.0,316.2 L131.5,317.4 L132.0,317.4 L132.5,316.4 L133.0,315.2 L133.5,314.5 L134.0,314.6 L134.5,315.1 L135.0,315.4 L135.5,319.5 L136.0,317.6 L136.5,317.2 L137.0,314.9 L137.5,314.4 L138.0,314.7 L138.5,315.5 L139.0,314.1 L139.5,317.2 L140.0,315.2 L140.5,316.8 L141.0,312.7 L141.5,314.5 L142.0,315.5 L142.5,315.6 L143.0,316.2 L143.5,315.9 L144.0,315.7 L144.5,312.8 L145.0,313.5 L145.5,311.6 L146.0,314.9 L146.5,315.5 L147.0,315.0 L147.5,314.0 L148.0,314.0 L148.5,317.2 L149.0,318.0 L149.5,315.8 L150.0,317.0 L150.5,313.4 L151.0,311.9 L151.5,313.3 L152.0,313.2 L152.5,313.5 L153.0,314.6 L153.5,318.6 L154.0,314.9 L154.5,314.7 L155.0,314.9 L155.5,314.5 L156.0,315.7 L156.5,317.1 L157.0,313.5 L157.5,314.2 L158.0,313.8 L158.5,314.5 L159.0,312.2 L159.5,311.1 L160.0,310.0 L160.5,313.5 L161.0,314.0 L161.5,314.0 L162.0,310.7 L162.5,312.3 L163.0,312.3 L163.5,311.3 L164.0,311.7 L164.5,313.9 L165.0,314.3 L165.5,313.7 L166.0,314.1 L166.5,312.8 L167.0,313.2 L167.5,313.3 L168.0,313.9 L168.5,313.3 L169.0,312.9 L169.5,312.8 L170.0,312.1 L170.5,315.7 L171.0,314.5 L171.5,314.1 L172.0,316.4 L172.5,316.0 L173.0,311.9 L173.5,313.7 L174.0,314.4 L174.5,316.0 L175.0,315.8 L175.5,315.0 L176.0,312.2 L176.5,311.8 L177.0,313.2 L177.5,313.9 L178.0,312.1 L178.5,312.4 L179.0,312.5 L179.5,313.2 L180.0,313.7 L180.5,313.1 L181.0,311.6 L181.5,314.5 L182.0,315.9 L182.5,314.0 L183.0,315.0 L183.5,314.5 L184.0,314.7 L184.5,314.5 L185.0,312.8 L185.5,314.1 L186.0,315.0 L186.5,312.8 L187.0,316.0 L187.5,317.1 L188.0,317.1 L188.5,317.3 L189.0,315.7 L189.5,313.8 L190.0,312.9 L190.5,312.4 L191.0,313.5 L191.5,313.6 L192.0,314.6 L192.5,311.3 L193.0,316.1 L193.5,317.5 L194.0,314.9 L194.5,315.0 L195.0,314.8 L195.5,314.5 L196.0,313.8 L196.5,313.7 L197.0,312.7 L197.5,313.8 L198.0,313.9 L198.5,314.4 L199.0,313.0 L199.5,313.7 L200.0,314.0 L200.5,314.8 L201.0,312.8 L201.5,314.2 L202.0,315.3 L202.5,315.1 L203.0,313.8 L203.5,313.2 L204.0,313.4 L204.5,314.7 L205.0,316.2 L205.5,314.3 L206.0,313.1 L206.5,314.1 L207.0,314.1 L207.5,312.7 L208.0,312.4 L208.5,313.2 L209.0,314.5 L209.5,312.3 L210.0,311.9 L210.5,313.8 L211.0,312.1 L211.5,313.3 L212.0,314.0 L212.5,313.6 L213.0,312.2 L213.5,313.1 L214.0,313.0 L214.5,313.8 L215.0,312.5 L215.5,314.7 L216.0,311.6 L216.5,312.7 L217.0,313.3 L217.5,314.7 L218.0,313.0 L218.5,314.0 L219.0,312.9 L219.5,314.2 L220.0,316.0 L220.5,313.6 L221.0,314.0 L221.5,312.3 L222.0,314.3 L222.5,315.2 L223.0,313.9 L223.5,312.0 L224.0,313.4 L224.5,314.8 L225.0,315.2 L225.5,314.9 L226.0,311.3 L226.5,311.7 L227.0,314.6 L227.5,312.0 L228.0,314.3 L228.5,316.0 L229.0,315.0 L229.5,315.2 L230.0,313.3 L230.5,311.5 L231.0,312.5 L231.5,312.6 L232.0,312.8 L232.5,313.9 L233.0,313.1 L233.5,313.3 L234.0,313.6 L234.5,313.2 L235.0,315.5 L235.5,314.3 L236.0,313.4 L236.5,312.8 L237.0,312.0 L237.5,314.4 L238.0,313.5 L238.5,311.6 L239.0,311.7 L239.5,312.3 L240.0,312.1 L240.5,314.0 L241.0,311.6 L241.5,313.1 L242.0,313.0 L242.5,311.2 L243.0,312.3 L243.5,312.5 L244.0,313.3 L244.5,312.2 L245.0,312.9 L245.5,310.5 L246.0,310.5 L246.5,313.0 L247.0,314.1 L247.5,313.0 L248.0,311.9 L248.5,313.8 L249.0,310.1 L249.5,310.7 L250.0,312.9 L250.5,313.4 L251.0,311.3 L251.5,309.6 L252.0,313.4 L252.5,312.9 L253.0,311.3 L253.5,312.0 L254.0,313.3 L254.5,309.1 L255.0,312.7 L255.5,313.3 L256.0,309.7 L256.5,312.3 L257.0,309.7 L257.5,312.8 L258.0,312.7 L258.5,315.1 L259.0,312.0 L259.5,311.9 L260.0,313.2 L260.5,311.3 L261.0,310.7 L261.5,310.9 L262.0,311.3 L262.5,310.1 L263.0,311.8 L263.5,312.3 L264.0,311.8 L264.5,313.8 L265.0,311.7 L265.5,313.2 L266.0,311.2 L266.5,312.3 L267.0,309.0 L267.5,310.9 L268.0,310.9 L268.5,310.4 L269.0,310.1 L269.5,310.4 L270.0,309.9 L270.5,307.8 L271.0,309.3 L271.5,309.7 L272.0,309.9 L272.5,309.2 L273.0,310.2 L273.5,311.7 L274.0,310.7 L274.5,310.1 L275.0,312.4 L275.5,312.5 L276.0,312.4 L276.5,312.7 L277.0,310.8 L277.5,310.5 L278.0,312.0 L278.5,310.2 L279.0,310.2 L279.5,310.9 L280.0,311.0 L280.5,310.2 L281.0,311.6 L281.5,310.4 L282.0,311.3 L282.5,312.0 L283.0,311.6 L283.5,311.5 L284.0,309.0 L284.5,308.0 L285.0,308.6 L285.5,310.2 L286.0,312.0 L286.5,308.9 L287.0,310.0 L287.5,308.8 L288.0,308.5 L288.5,309.0 L289.0,310.5 L289.5,310.2 L290.0,311.4 L290.5,308.9 L291.0,310.6 L291.5,311.1 L292.0,310.1 L292.5,310.3 L293.0,309.0 L293.5,307.9 L294.0,308.4 L294.5,308.2 L295.0,312.8 L295.5,309.7 L296.0,311.6 L296.5,310.2 L297.0,309.9 L297.5,310.4 L298.0,308.5 L298.5,310.1 L299.0,309.9 L299.5,307.3 L300.0,309.3 L300.5,309.8 L301.0,309.8 L301.5,311.3 L302.0,309.1 L302.5,309.7 L303.0,310.1 L303.5,308.1 L304.0,310.2 L304.5,307.3 L305.0,306.7 L305.5,308.9 L306.0,307.4 L306.5,308.2 L307.0,306.4 L307.5,308.2 L308.0,307.1 L308.5,308.7 L309.0,306.7 L309.5,308.7 L310.0,308.3 L310.5,308.7 L311.0,308.6 L311.5,308.8 L312.0,306.9 L312.5,304.7 L313.0,307.5 L313.5,307.0 L314.0,307.5 L314.5,308.8 L315.0,306.0 L315.5,306.7 L316.0,307.2 L316.5,306.7 L317.0,308.4 L317.5,308.3 L318.0,307.3 L318.5,306.8 L319.0,309.0 L319.5,307.7 L320.0,309.0 L320.5,309.2 L321.0,306.1 L321.5,306.2 L322.0,307.7 L322.5,308.6 L323.0,309.4 L323.5,309.7 L324.0,310.1 L324.5,308.3 L325.0,308.0 L325.5,309.2 L326.0,307.9 L326.5,309.5 L327.0,306.5 L327.5,308.5 L328.0,308.0 L328.5,305.5 L329.0,308.6 L329.5,308.7 L330.0,308.3 L330.5,306.7 L331.0,307.0 L331.5,309.8 L332.0,307.5 L332.5,303.2 L333.0,305.4 L333.5,305.6 L334.0,307.1 L334.5,307.2 L335.0,306.5 L335.5,306.4 L336.0,308.8 L336.5,306.3 L337.0,310.0 L337.5,307.8 L338.0,306.4 L338.5,308.4 L339.0,308.8 L339.5,306.7 L340.0,308.5 L340.5,305.5 L341.0,305.9 L341.5,308.7 L342.0,307.7 L342.5,306.0 L343.0,307.9 L343.5,309.0 L344.0,308.0 L344.5,305.4 L345.0,306.5 L345.5,307.8 L346.0,308.7 L346.5,310.4 L347.0,308.1 L347.5,307.1 L348.0,307.4 L348.5,309.1 L349.0,306.7 L349.5,309.0 L350.0,304.3 L350.5,307.6 L351.0,306.6 L351.5,307.8 L352.0,308.5 L352.5,306.2 L353.0,306.9 L353.5,307.6 L354.0,308.2 L354.5,306.4 L355.0,305.7 L355.5,304.3 L356.0,309.8 L356.5,307.8 L357.0,307.1 L357.5,305.2 L358.0,307.9 L358.5,306.7 L359.0,309.0 L359.5,308.9 L360.0,307.7 L360.5,308.3 L361.0,306.0 L361.5,306.4 L362.0,306.1 L362.5,305.1 L363.0,306.5 L363.5,306.7 L364.0,308.9 L364.5,303.1 L365.0,305.0 L365.5,305.2 L366.0,305.8 L366.5,307.2 L367.0,307.6 L367.5,307.2 L368.0,306.4 L368.5,307.4 L369.0,307.6 L369.5,304.7 L370.0,305.9 L370.5,304.7 L371.0,304.7 L371.5,306.4 L372.0,306.8 L372.5,307.0 L373.0,305.7 L373.5,306.2 L374.0,305.4 L374.5,306.9 L375.0,307.7 L375.5,309.4 L376.0,309.2 L376.5,306.4 L377.0,306.0 L377.5,305.2 L378.0,306.6 L378.5,309.3 L379.0,308.4 L379.5,304.2 L380.0,304.2 L380.5,304.1 L381.0,306.5 L381.5,306.5 L382.0,306.9 L382.5,309.0 L383.0,306.2 L383.5,305.3 L384.0,308.7 L384.5,307.6 L385.0,305.8 L385.5,303.5 L386.0,303.5 L386.5,302.3 L387.0,305.2 L387.5,306.1 L388.0,307.6 L388.5,306.5 L389.0,305.5 L389.5,305.1 L390.0,308.5 L390.5,304.6 L391.0,306.0 L391.5,306.2 L392.0,307.0 L392.5,305.9 L393.0,306.8 L393.5,307.5 L394.0,306.4 L394.5,305.6 L395.0,305.7 L395.5,304.7 L396.0,305.4 L396.5,305.5 L397.0,306.2 L397.5,307.9 L398.0,308.3 L398.5,306.1 L399.0,306.9 L399.5,306.7 L400.0,307.2 L400.5,306.4 L401.0,306.4 L401.5,305.4 L402.0,304.7 L402.5,306.7 L403.0,307.8 L403.5,307.3 L404.0,306.8 L404.5,306.4 L405.0,305.3 L405.5,303.2 L406.0,305.8 L406.5,306.0 L407.0,305.0 L407.5,304.1 L408.0,306.9 L408.5,303.6 L409.0,307.3 L409.5,306.9 L410.0,309.1 L410.5,305.6 L411.0,305.5 L411.5,304.8 L412.0,305.4 L412.5,305.1 L413.0,304.3 L413.5,306.4 L414.0,304.6 L414.5,304.4 L415.0,305.7 L415.5,304.7 L416.0,304.4 L416.5,305.4 L417.0,304.7 L417.5,303.3 L418.0,304.4 L418.5,304.6 L419.0,307.2 L419.5,304.2 L420.0,306.0 L420.5,304.1 L421.0,303.9 L421.5,303.7 L422.0,304.3 L422.5,305.1 L423.0,306.4 L423.5,303.5 L424.0,305.0 L424.5,304.9 L425.0,304.5 L425.5,302.1 L426.0,303.5" fill="none" stroke="#e61ee6" stroke-width="1.5" stroke-linejoin="round"/>
<rect x="34.3" y="240" width="408" height="2" fill="#0000c8"/>
<rect x="34.3" y="368" width="408" height="2" fill="#0000c8"/>
<rect x="426" y="240.1" width="2" height="129.7" fill="#b4b4b0"/>
<rect x="426.6" y="240.1" width="0.9" height="129.7" fill="#dcdcd8"/>
<text x="30.7" y="244.0" text-anchor="end">10</text>
<text x="30.7" y="269.7" text-anchor="end">8</text>
<text x="30.7" y="295.8" text-anchor="end">6</text>
<text x="30.7" y="320.4" text-anchor="end">4</text>
<text x="30.7" y="346.3" text-anchor="end">2</text>
<rect x="438" y="355.3" width="3" height="1.4" fill="#0000b0"/>
<rect x="436" y="342.6" width="6" height="1.6" fill="#0000c8"/>
<text x="444.3" y="345.8">4</text>
<rect x="438" y="329.9" width="3" height="1.4" fill="#0000b0"/>
<rect x="436" y="316.7" width="6" height="1.6" fill="#0000c8"/>
<text x="444.3" y="319.9">8</text>
<rect x="438" y="304.6" width="3" height="1.4" fill="#0000b0"/>
<rect x="436" y="292.1" width="6" height="1.6" fill="#0000c8"/>
<text x="444.3" y="295.3">12</text>
<rect x="438" y="279.1" width="3" height="1.4" fill="#0000b0"/>
<rect x="436" y="266.0" width="6" height="1.6" fill="#0000c8"/>
<text x="444.3" y="269.2">16</text>
<rect x="438" y="253.5" width="3" height="1.4" fill="#0000b0"/>
<rect x="436" y="240.3" width="6" height="1.6" fill="#0000c8"/>
<text x="444.3" y="243.5">20</text>
<text x="38.1" y="381.6" text-anchor="middle">0.0</text>
<text x="82.8" y="381.6" text-anchor="middle">0.5</text>
<text x="127.5" y="381.6" text-anchor="middle">1.0</text>
<text x="172.3" y="381.6" text-anchor="middle">1.5</text>
<text x="217.0" y="381.6" text-anchor="middle">2.0</text>
<text x="261.8" y="381.6" text-anchor="middle">2.5</text>
<text x="306.5" y="381.6" text-anchor="middle">3.0</text>
<text x="351.3" y="381.6" text-anchor="middle">3.5</text>
<text x="396.0" y="381.6" text-anchor="middle">4.0</text>
<text x="440.8" y="381.6" text-anchor="middle">4.5</text>
</svg>

<!-- right column -->
<div class="gb" style="left:463px;top:78px;width:135px;height:81px"></div>
<div class="lg" style="left:470px;top:78px;width:68px"></div>
<div class="gb" style="left:463px;top:166px;width:135px;height:197px"></div>
<div class="lg" style="left:470px;top:166px;width:57px"></div>
<div class="gb" style="left:463px;top:368px;width:135px;height:25px"></div>
<div class="gb" style="left:463px;top:398px;width:135px;height:55px"></div>

<div class="combo" style="left:472px;top:175px;width:82px;height:20px"></div>
<div class="dd" style="left:536px;top:177px;width:16px;height:16px"></div>
<svg class="abs" style="left:539px;top:182px" width="10" height="7" viewBox="0 0 10 7"><path d="M1.2 1.2 L5 5 L8.8 1.2" fill="none" stroke="#2c2c40" stroke-width="1.6"/></svg>
<!-- refresh button -->
<div class="abs" style="left:561px;top:175px;width:21.5px;height:21px;box-sizing:border-box;background:#f0efe6;border:1px solid #fbfbf6;border-right:1.5px solid #3c3c38;border-bottom:1.5px solid #3c3c38;box-shadow:inset -1px -1px 0 #a5a396"></div>
<svg class="abs" style="left:563px;top:176px" width="16" height="17" viewBox="0 0 16 17"><path d="M1.6 1.4 H12 L14.3 3.6 V15.6 H1.6 Z" fill="#fdfdfb" stroke="#222" stroke-width="1.5"/><path d="M5 6.4 A3.1 3.1 0 0 1 9.8 4.6" fill="none" stroke="#12b012" stroke-width="1.7"/><path d="M8.6 2.6 L11.8 5.2 L8.2 6.9 Z" fill="#0a9a0a"/><path d="M11 10.4 A3.1 3.1 0 0 1 6.2 12.4" fill="none" stroke="#12b012" stroke-width="1.7"/><path d="M7.4 14.4 L4.2 11.8 L7.8 10.1 Z" fill="#0a9a0a"/></svg>

<div class="edit" style="left:524px;top:201px;width:58px;height:18px"></div>
<div class="edit" style="left:524px;top:222.5px;width:58px;height:19px"></div>

<div class="cb" style="left:474px;top:244px"></div>
<div class="cb" style="left:474px;top:260.4px"><svg width="9" height="9" viewBox="0 0 9 9"><path d="M1.2 4 L3.6 6.6 L7.8 1.6" fill="none" stroke="#1fba1f" stroke-width="2"/></svg></div>
<div class="cb" style="left:474px;top:275px"><svg width="9" height="9" viewBox="0 0 9 9"><path d="M1.2 4 L3.6 6.6 L7.8 1.6" fill="none" stroke="#1fba1f" stroke-width="2"/></svg></div>
<div class="cb" style="left:474px;top:290.5px"><svg width="9" height="9" viewBox="0 0 9 9"><path d="M1.2 4 L3.6 6.6 L7.8 1.6" fill="none" stroke="#1fba1f" stroke-width="2"/></svg></div>
<div class="cb" style="left:474px;top:305.4px"><svg width="9" height="9" viewBox="0 0 9 9"><path d="M1.2 4 L3.6 6.6 L7.8 1.6" fill="none" stroke="#1fba1f" stroke-width="2"/></svg></div>
<div class="cb dis" style="left:474px;top:321px"><svg width="9" height="9" viewBox="0 0 9 9"><path d="M1.2 4 L3.6 6.6 L7.8 1.6" fill="none" stroke="#c9c7ba" stroke-width="2"/></svg></div>

<div class="btn" style="left:521px;top:338px;width:70px;height:20px"></div>

<!-- bottom stat boxes -->
<div class="eb" style="left:3px;top:398px;width:142px;height:54px"></div>
<div class="lg" style="left:11px;top:398px;width:54px;height:2px"></div>
<div class="sq" style="left:13px;top:395px;background:#00f0f0"></div>
<div class="eb" style="left:156px;top:398px;width:139px;height:54px"></div>
<div class="lg" style="left:163px;top:398px;width:63px;height:2px"></div>
<div class="sq" style="left:165px;top:395px;background:#a3a395"></div>
<div class="eb" style="left:309px;top:398px;width:137px;height:40px"></div>
<div class="lg" style="left:317px;top:398px;width:36px;height:2px"></div>
<div class="sq" style="left:319px;top:395px;background:#e010e0"></div>

<span class="t" style="left:6.7px;top:51.1px;transform:scaleX(0.962)">Эталонный тест</span>
<span class="t" style="left:98.2px;top:51.1px;transform:scaleX(0.956)">Создание диска</span>
<span class="t" style="left:187.2px;top:51.1px;transform:scaleX(0.961)">Инф. о диске</span>
<span class="t" style="left:263.9px;top:48.7px;transform:scaleX(0.987)">Качество диска</span>
<span class="t" style="left:352.9px;top:51.1px;transform:scaleX(0.949)">Advanced Disc Quality</span>
<span class="t" style="left:468.4px;top:51.1px;transform:scaleX(0.962)">Сканирование диска</span>
<span class="t" style="left:160.9px;top:13.2px;transform:scaleX(1.080)">[1:0]</span>
<span class="t" style="left:193.4px;top:13.2px;transform:scaleX(0.857)">BENQ DVD DD DW1640 BSRB</span>
<span class="t" style="left:468.7px;top:12.7px;transform:scaleX(0.997)">Старт</span>
<span class="t" style="left:545.2px;top:12.7px;transform:scaleX(0.974)">Выход</span>
<span class="t" style="left:472.1px;top:72.1px;transform:scaleX(0.955);color:#24508c">Инф. о диске</span>
<span class="t" style="left:471.7px;top:86.1px">Тип:</span>
<span class="t" style="left:515.1px;top:86.1px;transform:scaleX(0.959);color:#1c1c5c">DVD-R</span>
<span class="t" style="left:471.7px;top:103.0px">ID:</span>
<span class="t" style="left:515.1px;top:103.0px;transform:scaleX(0.918);color:#1c1c5c">ProdiscF01</span>
<span class="t" style="left:471.7px;top:119.9px">Дата:</span>
<span class="t" style="left:515.1px;top:119.9px;transform:scaleX(0.952);color:#1c1c5c">16 Feb 2007</span>
<span class="t" style="left:471.7px;top:137.3px;transform:scaleX(0.970)">Метка:</span>
<span class="t" style="left:472.1px;top:159.7px;transform:scaleX(1.031);color:#24508c">Установки</span>
<span class="t" style="left:476.0px;top:178.5px;transform:scaleX(1.029)">8 X</span>
<span class="t" style="left:474.0px;top:203.9px;transform:scaleX(0.941)">Старт:</span>
<span class="t" style="left:527.2px;top:203.4px;transform:scaleX(0.938)">0000 MB</span>
<span class="t" style="left:474.0px;top:225.9px;transform:scaleX(0.954)">Конец:</span>
<span class="t" style="left:527.2px;top:224.9px;transform:scaleX(0.938)">4475 MB</span>
<span class="t" style="left:489.7px;top:243.7px;transform:scaleX(0.970)">Быстр.скан.</span>
<span class="t" style="left:489.7px;top:260.7px;transform:scaleX(0.939)">Отобр. C1/PIE</span>
<span class="t" style="left:489.7px;top:275.1px;transform:scaleX(0.947)">Отобр. C2/PIF</span>
<span class="t" style="left:489.7px;top:290.1px;transform:scaleX(0.921)">Отобр. Jitter</span>
<span class="t" style="left:489.7px;top:305.1px;transform:scaleX(0.957)">Отобр. скор. чтения</span>
<span class="t" style="left:489.7px;top:320.3px;transform:scaleX(0.976);color:#b4b1a2">Отобр. скор. записи</span>
<span class="t" style="left:532.2px;top:341.7px;transform:scaleX(0.997)">Advanced</span>
<span class="t" style="left:473.9px;top:373.7px;transform:scaleX(0.990)">Индекс</span>
<span class="t" style="left:576.4px;top:373.7px;transform:scaleX(1.053);color:#1c1c5c">95</span>
<span class="t" style="left:473.9px;top:407.0px;transform:scaleX(0.937)">Выполнено:</span>
<span class="t" style="left:560.4px;top:407.0px;transform:scaleX(0.926);color:#1c1c5c">100 %</span>
<span class="t" style="left:473.9px;top:421.9px;transform:scaleX(0.958)">Положение:</span>
<span class="t" style="left:547.5px;top:421.9px;transform:scaleX(0.949);color:#1c1c5c">4474 MB</span>
<span class="t" style="left:473.9px;top:436.4px;transform:scaleX(0.967)">Скорость:</span>
<span class="t" style="left:559.1px;top:436.4px;transform:scaleX(0.949);color:#1c1c5c">8.35 X</span>
<span class="t" style="left:24.2px;top:392.2px;transform:scaleX(0.894)">PI Errors</span>
<span class="t" style="left:11.7px;top:407.9px;transform:scaleX(0.928)">Среднее:</span>
<span class="t" style="left:114.7px;top:407.9px;transform:scaleX(0.971);color:#1c1c5c">6.65</span>
<span class="t" style="left:11.7px;top:422.7px;transform:scaleX(0.981)">Максим.:</span>
<span class="t" style="left:123.2px;top:422.7px;transform:scaleX(0.906);color:#1c1c5c">21</span>
<span class="t" style="left:11.7px;top:436.7px;transform:scaleX(0.997)">Итого:</span>
<span class="t" style="left:106.7px;top:436.7px;transform:scaleX(0.941);color:#1c1c5c">77765</span>
<span class="t" style="left:176.7px;top:392.2px;transform:scaleX(0.904)">PI Failures</span>
<span class="t" style="left:164.7px;top:407.9px;transform:scaleX(0.928)">Среднее:</span>
<span class="t" style="left:267.7px;top:407.9px;transform:scaleX(0.986);color:#1c1c5c">0.11</span>
<span class="t" style="left:164.7px;top:422.7px;transform:scaleX(0.981)">Максим.:</span>
<span class="t" style="left:281.7px;top:422.7px;color:#1c1c5c">8</span>
<span class="t" style="left:164.7px;top:436.7px;transform:scaleX(0.997)">Итого:</span>
<span class="t" style="left:265.2px;top:436.7px;transform:scaleX(0.931);color:#1c1c5c">1064</span>
<span class="t" style="left:329.2px;top:392.2px;transform:scaleX(0.925)">Jitter</span>
<span class="t" style="left:317.7px;top:407.9px;transform:scaleX(0.928)">Среднее:</span>
<span class="t" style="left:409.7px;top:407.9px;transform:scaleX(0.936);color:#1c1c5c">8.47 %</span>
<span class="t" style="left:317.7px;top:422.7px;transform:scaleX(0.981)">Максим.:</span>
<span class="t" style="left:409.7px;top:422.7px;transform:scaleX(0.936);color:#1c1c5c">10.8 %</span>
<span class="t" style="left:317.7px;top:440.2px;transform:scaleX(0.882)">Сбои PO:</span>
<span class="t" style="left:435.7px;top:440.2px;color:#1c1c5c">0</span>
</body></html>
